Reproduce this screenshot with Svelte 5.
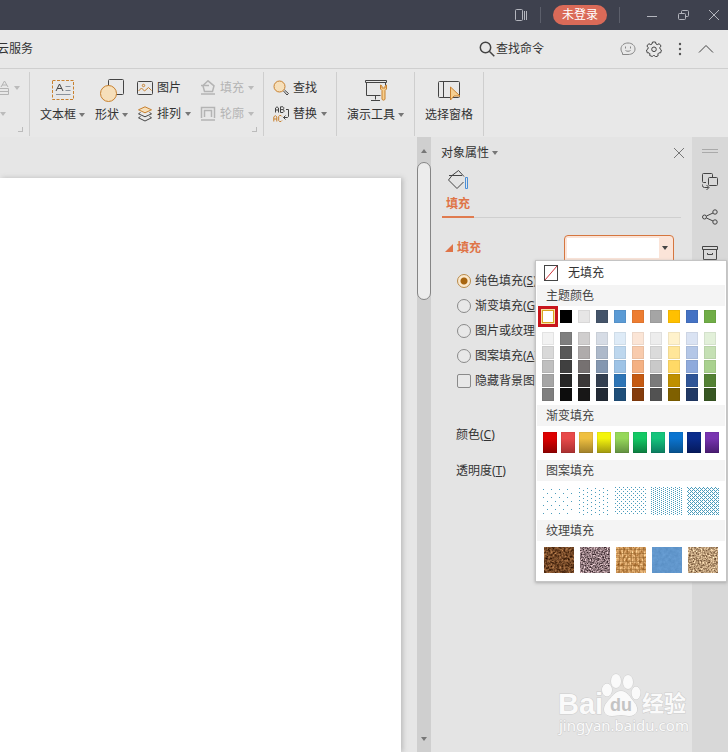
<script lang="ts">
  let fillType = $state('solid');
  let hideBackground = $state(false);
  let selected = $state('#ffffff');

  const fillTypes = [
    { id: 'solid', label: '纯色填充', key: 'S' },
    { id: 'gradient', label: '渐变填充', key: 'G' },
    { id: 'picture', label: '图片或纹理填充', key: 'P' },
    { id: 'pattern', label: '图案填充', key: 'A' }
  ];

  const themeColors = [
    '#ffffff', '#000000', '#e7e6e6', '#44546a', '#5b9bd5',
    '#ed7d31', '#a5a5a5', '#ffc000', '#4472c4', '#70ad47'
  ];

  // One row per shade, from light to dark
  const shades = [
    ['#f2f2f2', '#7f7f7f', '#d0cece', '#d6dce5', '#deebf7', '#fbe5d6', '#ededed', '#fff2cc', '#dae3f3', '#e2f0d9'],
    ['#d9d9d9', '#595959', '#afabab', '#adb9ca', '#bdd7ee', '#f8cbad', '#dbdbdb', '#ffe699', '#b4c7e7', '#c5e0b4'],
    ['#bfbfbf', '#404040', '#767171', '#8497b0', '#9dc3e6', '#f4b183', '#c9c9c9', '#ffd966', '#8faadc', '#a9d18e'],
    ['#a6a6a6', '#262626', '#3b3838', '#333f50', '#2e75b6', '#c55a11', '#7b7b7b', '#bf9000', '#2f5597', '#548235'],
    ['#7f7f7f', '#0d0d0d', '#181717', '#222a35', '#1f4e79', '#843c0c', '#525252', '#7f6000', '#203864', '#385723']
  ];

  const gradients = [
    ['#dc0000', '#8c0000'], ['#e84a4a', '#a83030'], ['#efc040', '#a0802a'], ['#f4f40c', '#a09810'],
    ['#96d85a', '#629040'], ['#14c864', '#0c7c40'], ['#14c47c', '#0c7c60'], ['#0a74d0', '#08508c'],
    ['#0a2c8c', '#06195a'], ['#7834b0', '#481c70']
  ];

  const patterns = [
    { id: 'p5', w: 8, h: 8, dots: [[0, 2], [4, 6]] },
    { id: 'p10', w: 8, h: 4, dots: [[0, 1], [4, 3]] },
    { id: 'p20', w: 4, h: 4, dots: [[0, 0], [2, 2]] },
    { id: 'p30', w: 4, h: 2, dots: [[0, 0], [2, 1]] },
    { id: 'p50', w: 4, h: 4, dots: [[0, 0], [1, 1], [2, 2], [3, 3], [3, 1], [1, 3]] }
  ];

  // freq and slope/offset pairs (r, g, b) for the noise colouring
  const textures = [
    { id: 'walnut', freq: '0.45', r: [0.9, 0], g: [0.7, -0.07], b: [0.5, -0.1] },
    { id: 'granite', freq: '0.7', r: [1.4, -0.14], g: [1.3, -0.18], b: [1.3, -0.16] },
    { id: 'weave', freq: '0.5 0.3', r: [0.7, 0.48], g: [0.8, 0.22], b: [0.8, -0.02] },
    { id: 'denim', freq: '0.3', r: [0.1, 0.33], g: [0.1, 0.54], b: [0.1, 0.75] },
    { id: 'cork', freq: '0.6', r: [1.1, 0.18], g: [1.1, 0.06], b: [1, -0.03] }
  ];
</script>

<div class="app">
  <header class="titlebar">
    <button class="title-btn" aria-label="任务窗格">
      <svg width="14" height="14" viewBox="0 0 14 14"><rect x="1.5" y="1.5" width="7" height="11" rx="1" /><path d="M10.5 3v9M12.5 3v9" /></svg>
    </button>
    <span class="title-sep"></span>
    <button class="login">未登录</button>
    <span class="title-sep"></span>
    <div class="window-btns">
      <button class="title-btn" aria-label="最小化">
        <svg width="12" height="12" viewBox="0 0 12 12"><path d="M1 7.5h10" /></svg>
      </button>
      <button class="title-btn" aria-label="还原">
        <svg width="12" height="12" viewBox="0 0 12 12"><rect x="1.5" y="4.5" width="7" height="6" rx="1" /><path d="M4.5 4V2.5a1 1 0 0 1 1-1h5a1 1 0 0 1 1 1v4a1 1 0 0 1-1 1H9" /></svg>
      </button>
      <button class="title-btn" aria-label="关闭">
        <svg width="12" height="12" viewBox="0 0 12 12"><path d="M1 1l10 10M11 1L1 11" /></svg>
      </button>
    </div>
  </header>

  <nav class="menubar">
    <a class="cloud" href="#cloud">云服务</a>
    <button class="search">
      <svg width="16" height="16" viewBox="0 0 16 16" class="bold"><circle cx="6.5" cy="6.5" r="5.2" /><path d="M10.3 10.3l5 5" /></svg>
      <span>查找命令</span>
    </button>
    <div class="menu-icons">
      <button aria-label="反馈">
        <svg width="16" height="16" viewBox="0 0 16 16" class="pale"><path d="M2.5 12C1.500 10.8 1 9.500 1 8c0-3.500 3-6 7-6s7 2.500 7 6-3 5.500-7 5.500H2.500z" /><path d="M5.5 5.500v2M10.500 5.500v2M5.500 9.500c1.500 1 3.500 1 5 0" /></svg>
      </button>
      <button aria-label="设置">
        <svg width="16" height="16" viewBox="0 0 16 16"><path d="M6.5 1h3l.5 2 1.300.6 1.900-.9 1.900 2.300-1.300 1.600.3 1.400 1.300 1-.7 2.800-1.900.1-.9 1 .2 1.900-2.600 1.100L8.500 14.500h-1L6.200 15.500l-2.600-1.100.4-1.500-.9-1-1.900-.1L.5 9l1.400-1 .3-1.400L.9 5l1.900-2.300 1.900.9L6 3z" /><circle cx="8" cy="8.300" r="2.300" /></svg>
      </button>
      <button aria-label="更多">
        <svg width="16" height="16" viewBox="0 0 16 16" class="dots"><circle cx="8" cy="3" r="1.200" /><circle cx="8" cy="8" r="1.200" /><circle cx="8" cy="13" r="1.200" /></svg>
      </button>
      <button aria-label="收起功能区">
        <svg width="16" height="16" viewBox="0 0 16 16"><path d="M1 11.500l7-7 7 7" /></svg>
      </button>
    </div>
  </nav>

  <section class="ribbon">
    <div class="group first corner">
      <button class="row disabled" aria-label="字体效果">
        <svg width="10" height="16" viewBox="0 0 10 16"><path d="M1 7L4.500 1 8 7M2 5h5M0 8.500h8.500v6H0M0 11.500h8.500" /></svg>
        <i class="caret"></i>
      </button>
      <button class="row disabled" aria-label="更多字体"><i class="caret"></i></button>
    </div>

    <div class="group corner">
      <button class="large">
        <svg width="24" height="24" viewBox="0 0 24 24"><rect x="1.500" y="2.500" width="21" height="19" class="orange" stroke-dasharray="3 1.500" /><path d="M5 13L8.500 6 12 13M6.300 10.500h4.500" /><path d="M14.500 8.500h5M14.500 12.500h5M5 16.500h14.500" class="gray" /></svg>
        <span>文本框<i class="caret"></i></span>
      </button>
      <button class="large">
        <svg width="24" height="24" viewBox="0 0 24 24"><rect x="8.500" y="1.500" width="15" height="15" rx="1" /><circle cx="8.500" cy="15.500" r="8" fill="#f6dfba" class="orange" /></svg>
        <span>形状<i class="caret"></i></span>
      </button>
      <div class="stack two">
        <button class="row">
          <svg width="16" height="16" viewBox="0 0 16 16"><rect x=".5" y="1.500" width="15" height="13" rx="1" /><path d="M1.500 11l3-3 3 3 4-3.500 3 3" class="orange" /><circle cx="6.500" cy="5.500" r="1.200" class="orange" /></svg>
          <span>图片</span>
        </button>
        <button class="row disabled">
          <svg width="16" height="16" viewBox="0 0 16 16" class="heavy"><path d="M3 5.500L8 .8l6 5-1.500 5.700h-8L3 6M1 5.500h8" /><path d="M1 14h14" /></svg>
          <span>填充</span><i class="caret"></i>
        </button>
        <button class="row">
          <svg width="16" height="16" viewBox="0 0 16 16"><path d="M8 .8L14.500 3.800 8 6.800 1.500 3.800z" fill="#f6dfba" class="orange" /><path d="M3.500 6.500L1.500 7.800 8 10.800l6.500-3-2-1.300M3.500 10.500L1.500 11.800 8 15l6.500-3.200-2-1.300" /></svg>
          <span>排列</span><i class="caret"></i>
        </button>
        <button class="row disabled">
          <svg width="16" height="16" viewBox="0 0 16 16" class="heavy"><path d="M1.500 12V1.500h13V12M4.500 11V4.500h7V11M1 14h14" /></svg>
          <span>轮廓</span><i class="caret"></i>
        </button>
      </div>
    </div>

    <div class="group">
      <div class="stack">
        <button class="row">
          <svg width="16" height="16" viewBox="0 0 16 16"><circle cx="6.500" cy="6.500" r="5.500" fill="#f6dfba" class="orange" /><path d="M10.500 11l3.500 4 1.500-1.500-4-3.500" /></svg>
          <span>查找</span>
        </button>
        <button class="row">
          <svg width="16" height="16" viewBox="0 0 16 16"><path d="M2.500 6.500V2L4 .8 5.500 2v4.500M2.500 4h3M7.500.8v5.700H10l1-1V4.300l-1-.7H7.500M10 3.600l.7-.9V1.500L10 .8H7.500M13 3.500h2.500v7l-1 1h-4M12.500 9.500l-2 2 2 2" /><path d="M.8 15.500V11l1.500-1.500L3.800 11v4.500M.8 13h3M9 10.500l-1-1H6.500l-.8 1v4l.8 1H8l1-1" class="orange" /></svg>
          <span>替换</span><i class="caret"></i>
        </button>
      </div>
    </div>

    <div class="group">
      <button class="large">
        <svg width="24" height="24" viewBox="0 0 24 24"><path d="M1.500 2.500h21v2h-21zM2.500 4.500v13h14M21.500 4.500v3M11.500 17.500v4M7 22.500h9" /><path d="M16.500 7v4l1.500 1.500V21c0 1.500 3 1.500 3 0v-8.500l1.500-1.500V7L21 8v2h-3V8z" fill="#f6cf90" class="orange" /></svg>
        <span>演示工具<i class="caret"></i></span>
      </button>
    </div>

    <div class="group">
      <button class="large">
        <svg width="24" height="24" viewBox="0 0 24 24"><rect x="1.500" y="3.500" width="21" height="16" rx="1" /><path d="M6.500 3.500v16" /><path d="M13.500 9v13l3.500-4h6z" fill="#f6cf90" class="orange" /></svg>
        <span>选择窗格</span>
      </button>
    </div>
  </section>

  <main class="workspace">
    <div class="canvas"><div class="slide"></div></div>

    <div class="scrollbar">
      <i class="arrow up"></i>
      <div class="thumb"></div>
      <i class="arrow down"></i>
    </div>

    <aside class="panel">
      <div class="panel-head">
        <button class="panel-title">对象属性<i class="caret"></i></button>
        <button aria-label="关闭窗格">
          <svg width="12" height="12" viewBox="0 0 12 12" class="thin"><path d="M1 1l10 10M11 1L1 11" /></svg>
        </button>
      </div>

      <div class="tabs">
        <button class="tab">
          <svg width="22" height="22" viewBox="0 0 22 22"><path d="M2 6.500h13M5 6.500L11.500 1.500l5.500 6M5 6.500l-3.500 4.500 8.500 8.500 6.500-6.500" /><path d="M18.500 8.500h2v11h-2z" class="blue" /></svg>
          <span>填充</span>
        </button>
      </div>

      <div class="section-head">
        <h2><i class="fold"></i>填充</h2>
        <div class="picker">
          <button class="combo" aria-label="填充颜色">
            <span class="combo-value" style="background: {selected}"></span>
            <i class="caret"></i>
          </button>

          <div class="popup">
            <button class="no-fill">
              <svg width="16" height="16" viewBox="0 0 16 16"><rect x="1.500" y=".5" width="13" height="15" /><path d="M2 15L14 1" class="red" /></svg>
              <span>无填充</span>
            </button>

            <h3>主题颜色</h3>
            <div class="swatches theme">
              {#each themeColors as color}
                <button
                  class="swatch"
                  class:selected={color === selected}
                  style="background: {color}"
                  aria-label={color}
                  onclick={() => (selected = color)}
                ></button>
              {/each}
            </div>
            <div class="swatches shades">
              {#each shades as row}
                {#each row as color}
                  <button class="swatch" style="background: {color}" aria-label={color} onclick={() => (selected = color)}></button>
                {/each}
              {/each}
            </div>

            <h3>渐变填充</h3>
            <div class="swatches gradients">
              {#each gradients as [from, to]}
                <button class="swatch" style="background: linear-gradient({from} 30%, {to})" aria-label="渐变 {from}"></button>
              {/each}
            </div>

            <h3>图案填充</h3>
            <div class="tiles">
              {#each patterns as p}
                <button aria-label="图案 {p.id}">
                  <svg width="32" height="28" shape-rendering="crispEdges">
                    <defs>
                      <pattern id={p.id} width={p.w} height={p.h} patternUnits="userSpaceOnUse">
                        {#each p.dots as [x, y]}
                          <rect {x} {y} width="1" height="1" fill="#4a9cbc" stroke="none" class="dot" />
                        {/each}
                      </pattern>
                    </defs>
                    <rect width="32" height="28" fill="url(#{p.id})" class="tile" />
                  </svg>
                </button>
              {/each}
            </div>

            <h3>纹理填充</h3>
            <div class="tiles">
              {#each textures as t}
                <button aria-label="纹理 {t.id}">
                  <svg width="30" height="26">
                    <filter id={t.id} x="0" y="0" width="1" height="1" color-interpolation-filters="sRGB">
                      <feTurbulence type="fractalNoise" baseFrequency={t.freq} numOctaves="3" />
                      <feColorMatrix
                        values="{t.r[0]} 0 0 0 {t.r[1]} {t.g[0]} 0 0 0 {t.g[1]} {t.b[0]} 0 0 0 {t.b[1]} 0 0 0 0 1"
                      />
                    </filter>
                    <rect width="30" height="26" filter="url(#{t.id})" class="tile" />
                    {#if t.id === 'weave'}
                      <path d="M0 2.500h30M0 6.500h30M0 10.500h30M0 14.500h30M0 18.500h30M0 22.500h30M3.500 0v26M7.500 0v26M11.500 0v26M15.500 0v26M19.500 0v26M23.500 0v26M27.500 0v26" class="threads" />
                    {/if}
                  </svg>
                </button>
              {/each}
            </div>
          </div>
        </div>
      </div>

      <div class="options">
        {#each fillTypes as type}
          <label>
            <input type="radio" name="fill-type" value={type.id} bind:group={fillType} />
            <span>{type.label}(<u>{type.key}</u>)</span>
          </label>
        {/each}
        <label>
          <input type="checkbox" bind:checked={hideBackground} />
          <span>隐藏背景图形(<u>H</u>)</span>
        </label>
      </div>

      <div class="fields">
        <span>颜色(<u>C</u>)</span>
        <span>透明度(<u>T</u>)</span>
      </div>
    </aside>

    <aside class="sidebar">
      <span class="grip"></span>
      <button aria-label="切换">
        <svg width="18" height="18" viewBox="0 0 18 18"><path d="M5 10.500H2.500a1 1 0 0 1-1-1v-7a1 1 0 0 1 1-1h8a1 1 0 0 1 1 1v3" /><rect x="7.500" y="5.500" width="9" height="8" rx="1" /><path d="M1.500 12.500v1a2 2 0 0 0 2 2h4M5.500 13l2.500 2.500L5.500 18" /></svg>
      </button>
      <button aria-label="分享">
        <svg width="18" height="18" viewBox="0 0 18 18"><circle cx="3.500" cy="9" r="2" /><circle cx="14" cy="4" r="2.200" /><circle cx="14" cy="14" r="2.200" /><path d="M5.500 8L12 5M5.500 10l6.500 3" /></svg>
      </button>
      <button aria-label="备份">
        <svg width="18" height="18" viewBox="0 0 18 18"><path d="M1.500 2.500h15v3h-15zM2.500 5.500v10h13v-10M6.500 9v1.500h5V9" /></svg>
      </button>
    </aside>

    <div class="watermark">
      <svg width="136" height="72" viewBox="0 0 136 72">
        <g class="mark">
          <ellipse cx="52" cy="22" rx="5" ry="6.500" />
          <ellipse cx="61" cy="13" rx="5" ry="7" />
          <ellipse cx="73" cy="14" rx="5" ry="7" />
          <ellipse cx="81" cy="25" rx="4.500" ry="6.500" />
          <path d="M66 23c6 0 9 6 13 11 6 7 3 14-5 14-3 0-5-1-8-1s-5 1-9 1c-9 0-10-8-5-14 5-5 8-11 14-11z" />
          <text x="3" y="46" class="bai">Bai</text>
          <text x="87" y="43" class="jingyan">经验</text>
        </g>
        <text x="55" y="43" class="du">du</text>
        <text x="4" y="63" class="url">jingyan.baidu.com</text>
      </svg>
    </div>
  </main>
</div>

<style>
  :global(body) {
    background: #e4e4e4;
  }

  .app {
    display: flex;
    flex-direction: column;
    min-height: 100vh;
    overflow: hidden;
    font: 12px/20px "Noto Sans", "Noto Sans CJK SC", sans-serif;
    color: #333;
  }

  button {
    display: flex;
    align-items: center;
    padding: 0;
    border: 0;
    background: none;
    font: inherit;
    color: inherit;
    white-space: nowrap;
  }

  svg {
    display: block;
    flex: none;
    fill: none;
    stroke: #444;
  }

  svg .orange { stroke: #c8812f; }
  svg .blue { stroke: #4a8fd8; }
  svg .gray { stroke: #8a929c; }
  svg .red { stroke: #d0343c; }
  svg.bold { stroke-width: 1.5; }
  svg.heavy { stroke-width: 1.5; }
  svg.pale { stroke: #888; }
  svg.dots { fill: #555; stroke: none; }
  svg.thin { stroke: #777; }

  .caret {
    flex: none;
    width: 6px;
    height: 4px;
    margin-left: 3px;
    background: #777;
    clip-path: polygon(0 0, 100% 0, 50% 100%);
  }

  /* Title bar */
  .titlebar {
    display: flex;
    align-items: center;
    justify-content: flex-end;
    gap: 12px;
    height: 30px;
    padding: 0 8px;
    background: #3e414e;
  }

  .titlebar svg { stroke: #b4b6be; }

  .title-sep {
    width: 1px;
    height: 16px;
    background: #5c5f6b;
  }

  .login {
    height: 20px;
    padding: 0 9px;
    border-radius: 10px;
    background: #da6a58;
    color: #fff;
  }

  .window-btns {
    display: flex;
    gap: 19px;
    margin-left: 14px;
  }

  /* Menu bar */
  .menubar {
    display: flex;
    align-items: center;
    height: 38px;
    padding-right: 14px;
    border-bottom: 1px solid #cfcfcf;
    background: #e8e8e8;
  }

  .cloud {
    margin-left: -3px;
    color: #333;
    text-decoration: none;
  }

  .search {
    gap: 1px;
    margin-left: auto;
  }

  .menu-icons {
    display: flex;
    gap: 10px;
    margin-left: 76px;
  }

  /* Ribbon */
  .ribbon {
    display: flex;
    height: 68px;
    background: #e8e8e8;
    box-shadow: 0 1px 2px #ccc;
  }

  .group {
    position: relative;
    display: flex;
    gap: 8px;
    margin: 3px 0 1px;
    padding: 3px 9px 0;
    border-right: 1px solid #cecece;
  }

  .first {
    flex-direction: column;
    gap: 0;
    width: 20px;
    padding: 3px 9px 0 0;
  }

  .corner::after {
    content: "";
    position: absolute;
    right: 6px;
    bottom: 4px;
    width: 4px;
    height: 4px;
    border: solid #bbb;
    border-width: 0 1px 1px 0;
  }

  .row {
    gap: 4px;
    height: 26px;
  }

  .row .caret { margin-left: 0; }

  .disabled { color: #b4b4b4; }
  .disabled svg { stroke: #b4b4b4; }
  .disabled .caret { background: #bbb; }

  .large {
    flex-direction: column;
    align-self: flex-start;
    gap: 3px;
    padding: 3px 1px 0;
  }

  .large span {
    display: flex;
    align-items: center;
  }

  .stack {
    display: grid;
    align-content: start;
    justify-items: start;
  }

  .two {
    grid-template-columns: auto auto;
    column-gap: 9px;
  }

  /* Document area */
  .workspace {
    position: relative;
    display: flex;
    flex: 1;
  }

  .canvas {
    display: flex;
    flex: 1;
    padding: 41px 16px 0 0;
    background: #e6e6e6;
    box-sizing: border-box;
  }

  .slide {
    flex: 1;
    background: #fff;
    box-shadow: 2px 0 5px #bbb;
  }

  .scrollbar {
    display: flex;
    flex-direction: column;
    align-items: center;
    width: 14px;
    padding: 12px 0 11px;
    background: #cfcfcf;
    box-sizing: border-box;
  }

  .arrow {
    width: 6px;
    height: 4px;
    background: #777;
    clip-path: polygon(0 0, 100% 0, 50% 100%);
  }

  .up { transform: rotate(180deg); }
  .down { margin-top: auto; }

  .thumb {
    width: 12px;
    height: 23%;
    margin-top: 9px;
    border: 1px solid #858585;
    border-radius: 7px;
    background: #ececec;
  }

  /* Property panel */
  .panel {
    width: 261px;
    padding: 6px 7px 0 10px;
    background: #e4e4e4;
    box-sizing: border-box;
  }

  .panel-head {
    display: flex;
    justify-content: space-between;
    height: 20px;
  }

  .tabs {
    display: flex;
    margin: 1px 4px 0 1px;
    border-bottom: 1px solid #cfcfcf;
  }

  .tab {
    flex-direction: column;
    gap: 3px;
    margin-bottom: -1px;
    padding: 5px 4px 2px;
    border-bottom: 2px solid #e07b4f;
    color: #df7448;
    font-weight: bold;
  }

  .section-head {
    display: flex;
    align-items: center;
    justify-content: space-between;
    margin-top: 17px;
    padding: 0 11px 0 4px;
  }

  h2 {
    display: flex;
    align-items: center;
    gap: 4px;
    margin: 0;
    color: #df7448;
    font-size: 12px;
  }

  .fold {
    width: 8px;
    height: 8px;
    background: #df7448;
    clip-path: polygon(100% 0, 100% 100%, 0 100%);
  }

  .picker { position: relative; }

  .combo {
    width: 110px;
    height: 26px;
    padding: 2px;
    border: 1px solid #d5763f;
    border-radius: 4px 4px 0 0;
    background: #fbe4d8;
    box-sizing: border-box;
  }

  .combo-value {
    flex: 1;
    height: 20px;
  }

  .combo .caret {
    margin: 0 3px;
    background: #444;
  }

  .options {
    display: grid;
    gap: 5px;
    margin-top: 10px;
    padding-left: 16px;
  }

  .options label {
    display: flex;
    align-items: center;
    gap: 4px;
    height: 20px;
    white-space: nowrap;
  }

  input {
    flex: none;
    width: 14px;
    height: 14px;
    margin: 0;
    border: 1px solid #8a8a8a;
    background: #e8e8e8;
    appearance: none;
  }

  input[type="radio"] { border-radius: 50%; }

  input[type="radio"]:checked {
    border-color: #b98a48;
    background: radial-gradient(circle, #a8650f 3px, #fbe8cc 4px);
  }

  input[type="checkbox"] { border-radius: 2px; }

  .fields {
    display: grid;
    gap: 16px;
    margin-top: 34px;
    padding-left: 15px;
  }

  /* Colour popup */
  .popup {
    position: absolute;
    z-index: 2;
    top: 25px;
    right: -53px;
    width: 190px;
    padding-bottom: 3px;
    border: 1px solid #c4c4c4;
    background: #fff;
    box-shadow: 0 1px 3px #aaa;
  }

  .no-fill {
    gap: 9px;
    width: 100%;
    height: 24px;
    padding-left: 7px;
  }

  h3 {
    height: 21px;
    margin: 0 1px;
    padding-left: 9px;
    background: #f4f4f4;
    color: #444;
    font-size: 12px;
    font-weight: normal;
    line-height: 22px;
  }

  .swatches {
    display: grid;
    grid-template-columns: repeat(10, 12px);
    column-gap: 6px;
    padding: 0 6px;
  }

  .swatch {
    height: 13px;
    box-shadow: inset 0 0 0 1px rgba(0, 0, 0, 0.06);
  }

  .theme { padding-top: 4px; }

  .selected {
    outline: 3px solid #c8151c;
    outline-offset: 1px;
    box-shadow: 0 0 0 1px #f6e3a0, inset 0 0 0 1px #d9a520;
  }

  .shades {
    row-gap: 1px;
    padding-top: 9px;
    padding-bottom: 4px;
  }

  .gradients {
    grid-template-columns: repeat(10, 14px);
    column-gap: 4px;
    padding: 6px 7px 7px;
  }

  .gradients .swatch { height: 21px; }

  .tiles {
    display: grid;
    grid-template-columns: repeat(5, 30px);
    gap: 6px;
    justify-items: center;
    padding: 6px 8px 5px;
  }

  .tiles button { justify-content: center; }

  .tile { stroke: none; }
  .threads { stroke: #8a5a24; stroke-opacity: 0.4; }

  /* Right tool strip */
  .sidebar {
    display: flex;
    flex-direction: column;
    align-items: center;
    gap: 18px;
    width: 36px;
    padding-top: 12px;
    background: #d8d8d8;
    box-sizing: border-box;
  }

  .grip {
    width: 16px;
    height: 2px;
    margin-bottom: 1px;
    border: solid #aaa;
    border-width: 1px 0;
  }

  .watermark {
    position: absolute;
    right: 37px;
    bottom: 12px;
    pointer-events: none;
  }

  .mark {
    fill: #fafafa;
    stroke: #cdcdcd;
    paint-order: stroke;
  }

  .bai { font: bold 29px "Liberation Sans", sans-serif; }
  .jingyan { font: bold 22px "Noto Sans CJK SC", sans-serif; }

  .du {
    fill: #c4c4c4;
    stroke: none;
    font: bold 18px "Liberation Sans", sans-serif;
  }

  .url {
    fill: #fafafa;
    stroke: #cdcdcd;
    paint-order: stroke;
    font: 15px "Noto Sans", sans-serif;
  }
</style>
